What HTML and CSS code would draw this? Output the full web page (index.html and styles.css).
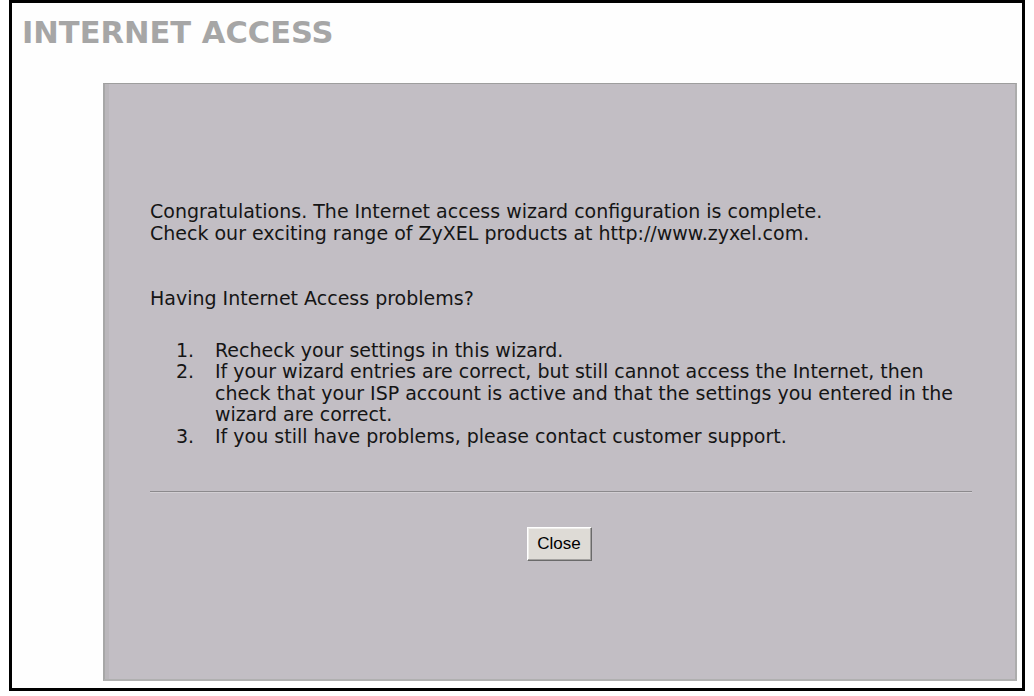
FILE: index.html
```html
<!DOCTYPE html>
<html lang="en">
<head>
    <meta charset="UTF-8">
    <meta name="viewport" content="width=device-width, initial-scale=1.0">
    <title>Internet Access</title>
    <link rel="stylesheet" href="styles.css">
</head>
<body>
    <div class="page">
        <h1 class="page-title">INTERNET ACCESS</h1>

        <div class="wizard-panel">
            <p class="msg">
                Congratulations. The Internet access wizard configuration is complete.<br>
                Check our exciting range of ZyXEL products at http://www.zyxel.com.
            </p>

            <p class="msg problems">Having Internet Access problems?</p>

            <ol class="tips">
                <li>Recheck your settings in this wizard.</li>
                <li>If your wizard entries are correct, but still cannot access the Internet, then check that your ISP account is active and that the settings you entered in the wizard are correct.</li>
                <li>If you still have problems, please contact customer support.</li>
            </ol>

            <hr class="divider">

            <div class="actions">
                <button class="close-btn">Close</button>
            </div>
        </div>
    </div>
</body>
</html>
```

FILE: styles.css
```css
* {
    box-sizing: border-box;
}

body {
    margin: 0;
    background: #ffffff;
}

.page {
    display: flex;
    flex-direction: column;
    margin-left: 9px;
    width: 1016px;
    height: 691px;
    padding: 15px 5px 7px 0;
    border: 3px solid #000000;
    background: #fefefe;
}

.page-title {
    margin: 0 0 35px 10px;
    font-family: "DejaVu Sans", Verdana, sans-serif;
    font-size: 30.5px;
    font-weight: bold;
    line-height: 30px;
    color: #a6a6a6;
}

.wizard-panel {
    flex: 1;
    margin-left: 91px;
    padding: 117px 43px 0 45px;
    background: #c2bec4;
    border-top: 1px solid #9e9e9e;
    border-left: 2px solid #a7a7a7;
    border-right: 2px solid #acacac;
    border-bottom: 2px solid #b0b0b0;
    box-shadow: inset 4px 0 0 #bab7bb;
    font-family: "DejaVu Sans", Tahoma, sans-serif;
    font-size: 19px;
    line-height: 21.5px;
    color: #151515;
}

.msg {
    margin: 0;
}

.msg.problems {
    margin-top: 44px;
}

.tips {
    list-style: none;
    counter-reset: tip;
    margin: 30px 0 0;
    padding-left: 26px;
}

.tips li {
    display: flex;
    counter-increment: tip;
}

.tips li::before {
    content: counter(tip) ".";
    flex: 0 0 39px;
}

.divider {
    margin: 44px 0 0;
    height: 0;
    border: none;
    border-top: 1px solid #8c8a8d;
    border-bottom: 1px solid #d2cfd3;
}

.actions {
    margin-top: 34px;
    padding-right: 4px;
    text-align: center;
}

.close-btn {
    width: 65px;
    height: 34px;
    padding: 0;
    font-family: "Liberation Sans", Arial, sans-serif;
    font-size: 17px;
    color: #000000;
    background: #dedbd6;
    border-top: 1px solid #ffffff;
    border-left: 1px solid #ffffff;
    border-right: 1px solid #6a6a6a;
    border-bottom: 1px solid #6a6a6a;
    box-shadow: inset -1px -1px 0 #a4a2a0, inset 1px 1px 0 #f0efec;
    cursor: pointer;
}
```
